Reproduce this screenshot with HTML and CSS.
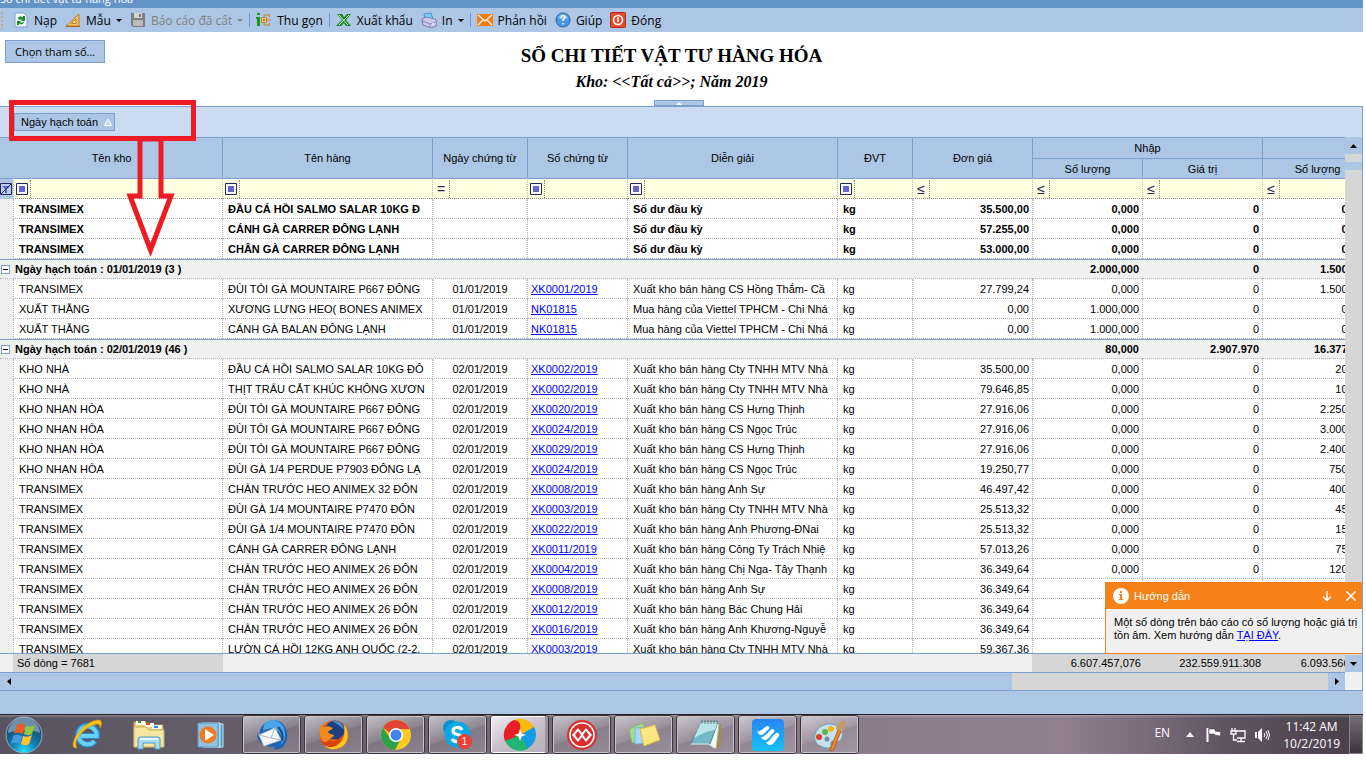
FILE: index.html
```
<!DOCTYPE html>
<html lang="vi">
<head>
    <meta charset="UTF-8">
    <meta name="viewport" content="width=device-width, initial-scale=1.0">
    <title>Sổ chi tiết vật tư hàng hóa</title>
    <link rel="stylesheet" href="styles.css">
</head>
<body>
    <div class="screen">
        <div class="titlebar"><span>Sổ chi tiết vật tư hàng hóa</span></div>

        <div class="toolbar">
            <span class="grip"></span>
            <button class="tool">
                <svg width="16" height="16" viewBox="0 0 16 16"><path d="M2 1h9l3 3v11H2z" fill="#f4f9ff" stroke="#7d9fce"/><path d="M5 6c1-2 4-2 5 0V4h2v5H8l1-1c-1-1-2-1-3 0zM11 10c-1 3-4 3-5 1v2H4V9h4L7 10c1 1 2 1 3 0z" fill="#12901f"/></svg>
                Nạp
            </button>
            <button class="tool">
                <svg width="16" height="16" viewBox="0 0 16 16"><path d="M1 14 14 2v12z" fill="#f3c260" stroke="#bd7d25"/><path d="M6 11.5 11 7v4.500z" fill="#fff2cf" stroke="#bd7d25"/><path d="M1 14.500h14" stroke="#a5661c"/></svg>
                Mẫu <i class="caret"></i>
            </button>
            <button class="tool" disabled>
                <svg width="16" height="16" viewBox="0 0 16 16"><path d="M1 1h14v14H3l-2-2z" fill="#7d7d7d"/><path d="M4 1h8v5H4z" fill="#d4d4d4"/><path d="M9 2h2v3H9z" fill="#777"/><path d="M3 8h10v6H3z" fill="#b9b9b9"/></svg>
                Báo cáo đã cất <i class="caret"></i>
            </button>
            <span class="sep"></span>
            <button class="tool">
                <svg width="16" height="16" viewBox="0 0 16 16"><path d="M1 1h3v2H1zM0 5h4v9H1V7H0z" fill="#159a1c"/><path d="M5.500 5.500h5v5h-5zM8 3v10M8 3h6M8 13h6M11 8h4M13.500 2v3M13.500 11v3" fill="none" stroke="#c98320"/><path d="M6 6h4v4H6z" fill="#ffe7a2"/><path d="M6.500 8h3M8 6.500v3" stroke="#a8620c"/></svg>
                Thu gọn
            </button>
            <span class="sep"></span>
            <button class="tool">
                <svg width="16" height="16" viewBox="0 0 16 16"><path d="M1 2h5l2 3 3-3h4l-5 6 5 6h-5l-2-3-3 3H0l6-6z" fill="#178a24"/><path d="m3 3 9 10M13 3 3 13" stroke="#d9f3d2"/></svg>
                Xuất khẩu
            </button>
            <button class="tool">
                <svg width="16" height="16" viewBox="0 0 16 16"><path d="m3 2 7-1 2 6-8 1z" fill="#7ccaf2" stroke="#4595c7"/><path d="m1 7 4-2 9 2 2 3-1 4-5 2-8-3z" fill="#c9c8e5" stroke="#7e7bb2"/><path d="m2 9 7 3 6-2M9 12v3" fill="none" stroke="#8d8abd"/><circle cx="12" cy="12" r="1" fill="#f6f6ff"/></svg>
                In <i class="caret"></i>
            </button>
            <span class="sep"></span>
            <button class="tool">
                <svg width="16" height="16" viewBox="0 0 16 16"><path d="M0 2h16v12H0z" fill="#ef7d17"/><path d="m1 3 7 6 7-6M1 13l5-5M15 13l-5-5" fill="none" stroke="#fff1de" stroke-width="1.300"/></svg>
                Phản hồi
            </button>
            <button class="tool">
                <svg width="16" height="16" viewBox="0 0 16 16"><circle cx="8" cy="8" r="7" fill="#4b96e4" stroke="#2664ac"/><path d="M3 6c1-5 9-5 10 0-3 2-7 2-10 0z" fill="#83bdf2"/><path d="M6 6c0-3 4-3 4-1 0 1-2 2-2 4M8 11v1.500" fill="none" stroke="#fff" stroke-width="1.500"/></svg>
                Giúp
            </button>
            <button class="tool">
                <svg width="16" height="16" viewBox="0 0 16 16"><rect x=".5" y=".5" width="15" height="15" rx="1" fill="#e34c2d" stroke="#a92b19"/><circle cx="8" cy="8" r="4.500" fill="none" stroke="#fff" stroke-width="1.600"/><path d="M8 5v5" stroke="#fff" stroke-width="1.600"/></svg>
                Đóng
            </button>
        </div>

        <div class="report-head">
            <button class="params">Chọn tham số...</button>
            <div class="titles">
                <h1>SỔ CHI TIẾT VẬT TƯ HÀNG HÓA</h1>
                <h2>Kho: &lt;&lt;Tất cả&gt;&gt;; Năm 2019</h2>
            </div>
            <button class="fold" aria-label="Ẩn tiêu đề"><i></i></button>
        </div>

        <div class="grid">
            <div class="group-panel">
                <button class="chip">Ngày hạch toán
                    <svg width="8" height="8" viewBox="0 0 8 8"><path d="M4 1 .5 7.500h7z" fill="#c5d8f0" stroke="#fff"/></svg>
                </button>
            </div>

            <div class="grid-area">
                <div class="table-pane">
                    <div class="rows">
                        <table>
                            <colgroup>
                                <col class="w-sel"><col class="w-kho"><col class="w-hang"><col class="w-ngay"><col class="w-so">
                                <col class="w-hang"><col class="w-dvt"><col class="w-gia"><col class="w-num"><col class="w-gia"><col class="w-num">
                            </colgroup>
                            <thead>
                                <tr class="h1">
                                    <th rowspan="2" colspan="2">Tên kho</th>
                                    <th rowspan="2">Tên hàng</th>
                                    <th rowspan="2">Ngày chứng từ</th>
                                    <th rowspan="2">Số chứng từ</th>
                                    <th rowspan="2">Diễn giải</th>
                                    <th rowspan="2">ĐVT</th>
                                    <th rowspan="2">Đơn giá</th>
                                    <th colspan="2">Nhập</th>
                                    <th></th>
                                </tr>
                                <tr class="h2">
                                    <th>Số lượng</th>
                                    <th>Giá trị</th>
                                    <th>Số lượng</th>
                                </tr>
                                <tr class="filter" id="filter"></tr>
                            </thead>
                            <tbody id="rows"></tbody>
                        </table>
                    </div>
                    <div class="summary">
                        <span class="w-sel"></span>
                        <span class="count">Số dòng = 7681</span>
                        <span class="blank"></span>
                        <span class="w-num sum">6.607.457,076</span>
                        <span class="w-gia sum">232.559.911.308</span>
                        <span class="w-num sum">6.093.566,385</span>
                    </div>
                </div>
                <div class="vscroll">
                    <button class="sb" aria-label="Lên"><svg width="7" height="4" viewBox="0 0 7 4"><path d="M0 4 3.500 0 7 4z"/></svg></button>
                    <span class="vthumb"></span>
                    <button class="sb" aria-label="Xuống"><svg width="7" height="4" viewBox="0 0 7 4"><path d="M0 0h7L3.500 4z"/></svg></button>
                </div>
                <div class="hscroll">
                    <button class="sb" aria-label="Trái"><svg width="4" height="7" viewBox="0 0 4 7"><path d="M4 0v7L0 3.500z"/></svg></button>
                    <span class="hthumb"></span>
                    <button class="sb" aria-label="Phải"><svg width="4" height="7" viewBox="0 0 4 7"><path d="M0 0v7l4-3.500z"/></svg></button>
                </div>
                <div class="corner"></div>

                <div class="notice">
                    <div class="notice-head">
                        <svg width="16" height="16" viewBox="0 0 16 16"><circle cx="8" cy="8" r="8" fill="#fff"/><path d="M7 3h2v2H7zM6 6h3v5h1v1H6v-1h1V7H6z" fill="#f58118"/></svg>
                        <span>Hướng dẫn</span>
                        <button aria-label="Thu nhỏ"><svg width="10" height="10" viewBox="0 0 10 10"><path d="M5 0v9M1 5.500l4 4 4-4"/></svg></button>
                        <button aria-label="Đóng"><svg width="10" height="10" viewBox="0 0 10 10"><path d="m0 0 10 10M10 0 0 10"/></svg></button>
                    </div>
                    <p>Một số dòng trên báo cáo có số lượng hoặc giá trị tồn âm. Xem hướng dẫn <a href="#">TẠI ĐÂY</a>.</p>
                </div>
            </div>

            <!-- đánh dấu vùng nhóm -->
            <svg class="mark" width="190" height="160" viewBox="0 0 190 160">
                <path d="M2.500 2.500h182v36H2.500zM131 39h21v57h10l-20.500 54L121 96h10z" fill="none" stroke="#ed1c24" stroke-width="5"/>
            </svg>
        </div>

        <div class="strip"></div>

        <div class="taskbar">
            <button class="start" aria-label="Start">
                <svg width="38" height="38" viewBox="0 0 38 38">
                    <defs><radialGradient id="orb" cx=".5" cy=".95" r=".8"><stop offset="0" stop-color="#1fe4ff"/><stop offset=".4" stop-color="#1583b8"/><stop offset="1" stop-color="#173f66"/></radialGradient></defs>
                    <circle cx="19" cy="19" r="18" fill="url(#orb)" stroke="#93aebd"/>
                    <path d="M3 17a16 16 0 0 1 32 0c-9-4-22-3-32 0z" fill="#c9dce6" opacity=".5"/>
                    <path d="M12 9c4-2 6-1 8 0l-2 9c-3-1-6-2-9 0z" fill="#ee5a26"/><path d="M21 10c3 1 6 1 9-1l-3 9c-3 2-6 1-8 0z" fill="#92c83e"/>
                    <path d="M8 20c3-2 6-1 9 0l-2 8c-3-1-6-2-9 0z" fill="#3f9be2"/><path d="M18 20c3 1 6 1 9-1l-3 9c-3 2-6 1-8 0z" fill="#fdc52d"/>
                </svg>
            </button>
            <button class="pin" aria-label="Internet Explorer">
                <svg width="32" height="32" viewBox="0 0 32 32"><path d="M24 22a9.500 9.500 0 1 1 2-5H10" fill="none" stroke="#238fd3" stroke-width="6"/><path d="M23.500 22a9 9 0 1 1 2-5H10" fill="none" stroke="#6bd0fb" stroke-width="4"/><path d="M6 29c-6 1-5-8 2-16C16 3 27-1 30 2c1 2 0 5-1 7 0-4-2-5-6-3C14 8 4 20 5 25c0 2 0 3 1 4z" fill="#f6c51c" stroke="#d79707" stroke-width=".6"/></svg>
            </button>
            <button class="pin" aria-label="Windows Explorer">
                <svg width="34" height="32" viewBox="0 0 34 32"><path d="M2 3h12l2 3h15v22H2z" fill="#e9cf78" stroke="#b79545"/><path d="M4 2h9v4H4zM13 4h9v4h-9zM20 6h10v4H20z" fill="#fffef5"/><path d="M6 2h3v2H6z" fill="#23a736"/><path d="M14 4h4v2h-4z" fill="#df4b23"/><path d="M22 7h4v2h-4z" fill="#2a8ce1"/><path d="M2 8h12l3 3h15v17H2z" fill="#f7e6a3" stroke="#d0b25c"/><path d="M6 30V20q0-2 2-2h18q2 0 2 2v10h-5v-6H11v6z" fill="#a8dcf4" stroke="#4e9fc4"/><path d="M8 20h18" stroke="#e9faff" stroke-width="2"/></svg>
            </button>
            <button class="pin" aria-label="Media Player">
                <svg width="28" height="28" viewBox="0 0 28 28"><path d="M8 3h18v23H8z" fill="#4f9bc5" stroke="#bee5f7"/><path d="M5 2h18v24H5z" fill="#7dbddf" stroke="#d2f0fc"/><path d="M1 2h20v24H1z" fill="#8fc5e3" stroke="#5a99be"/><circle cx="11" cy="14" r="8.500" fill="#f17920"/><path d="m8 8 9 6-9 6z" fill="#fff"/></svg>
            </button>

            <button class="task" aria-label="Thunderbird">
                <svg width="34" height="32" viewBox="0 0 34 32"><path d="M9 5c4-4 14-6 19 0 6 7 5 17 1 21-1 3-6 5-11 4l3-2C9 29 2 23 2 14l2 3c0-5 2-9 5-12z" fill="#1d62b5"/><path d="M11 3c6-3 13-2 17 4 3 6 3 13-2 19 2-8 0-14-7-16-4-1-9 0-11 2 0-4 1-7 3-9z" fill="#48a6e8"/><path d="m4 16 16-7 6 12-17 6z" fill="#f6f7f8" stroke="#bac4cd"/><path d="m4 16 12 3 4-10M16 19l10 2" fill="none" stroke="#aeb9c2"/><path d="M23 8c4 4 6 8 4 14" fill="none" stroke="#174680" stroke-width="2"/></svg>
            </button>
            <button class="task" aria-label="Firefox">
                <svg width="32" height="32" viewBox="0 0 32 32"><circle cx="16" cy="16" r="14.500" fill="#e95c12"/><circle cx="17" cy="11" r="9.500" fill="#1d3f83"/><path d="M14 2c7-1 11 3 12 9-3-4-8-7-12-9z" fill="#4a92cf"/><path d="M26 6c5 5 5 15 0 20s-15 6-20 0c7 3 14 1 17-3 4-5 4-11 3-17z" fill="#fcca26"/><path d="M3 5c1 2 2 3 4 3 4-2 5 0 8 1-1 2-4 2-5 4 1 2 4 2 6 3 0 3-4 2-5 5 4 2 8 0 10-1-2 7-12 8-16 2C1 17 1 10 3 5z" fill="#f28a1c"/><path d="M11 21c5 3 9 0 12-4 0 6-4 11-10 11-4 0-8-2-10-6 3 2 6 1 8-1z" fill="#d9410f"/></svg>
            </button>
            <button class="task" aria-label="Chrome">
                <svg width="32" height="32" viewBox="0 0 32 32"><circle cx="16" cy="16" r="15" fill="#fbc922"/><path d="M3 8.500a15 15 0 0 1 26 0L29.500 10H16a6.500 6.500 0 0 0-6 4z" fill="#e04535"/><path d="M3 8.500A15 15 0 0 0 15 31l6-11.500c-4 5-10 3-11.500-1z" fill="#2ba14b"/><circle cx="16" cy="16" r="7" fill="#fff"/><circle cx="16" cy="16" r="5.500" fill="#4385ee"/></svg>
            </button>
            <button class="task" aria-label="Skype">
                <svg width="32" height="32" viewBox="0 0 32 32"><circle cx="9" cy="9" r="8" fill="#0791cf"/><circle cx="22" cy="22" r="8" fill="#0791cf"/><circle cx="15.500" cy="15.500" r="13" fill="#08a8e7"/><path d="M20 11c-2-4-9-3-9 1 0 5 9 2 9 7 0 4-8 5-10 1" fill="none" stroke="#fff" stroke-width="3.200"/></svg>
                <span class="badge">1</span>
            </button>
            <button class="task active" aria-label="MISA">
                <svg width="34" height="34" viewBox="0 0 34 34"><path d="M17 17 8 3.500A16 16 0 0 1 31 9c2 6-3 10-8 8z" fill="#fbb80f"/><path d="M17 17 31 9a16 16 0 0 1-7 22c-7 2-10-4-7-8z" fill="#159ce5"/><path d="M17 17l8 13.500A16 16 0 0 1 2 23c-1-7 6-9 9-6z" fill="#22b573"/><path d="M17 17 2 23A16 16 0 0 1 10 2.500c7-2 9 5 7 9z" fill="#e91e26"/><path d="M13 2c7-2 15 1 18 7-5-4-10-2-14 2 1-4 0-7-4-9z" fill="#fbb80f"/><path d="m17 11 1.500 4.500L23 17l-4.500 1.500L17 23l-1.500-4.500L11 17l4.500-1.500z" fill="#fff"/></svg>
            </button>
            <button class="task" aria-label="Kế toán">
                <svg width="32" height="32" viewBox="0 0 32 32"><circle cx="16" cy="16" r="15" fill="#d9302f"/><circle cx="16" cy="16" r="12" fill="none" stroke="#fff" stroke-width="1.700"/><path d="m6 16 6-7 4 5 4-5 6 7-6 7-4-5-4 5z" fill="#fff"/><path d="m9 16 3-4 3 4-3 4zM17 16l3-4 3 4-3 4z" fill="#d9302f"/></svg>
            </button>
            <button class="task" aria-label="Sticky Notes">
                <svg width="34" height="32" viewBox="0 0 34 32"><path d="m2 10 14-6 5 16-16 4z" fill="#a5dd8a" stroke="#83b874"/><path d="m8 9 14-1 1 16-15 1z" fill="#a9d7fa" stroke="#7fb3d9"/><path d="m13 10 15-4 5 15-16 6z" fill="#fbe681" stroke="#d8b94e"/></svg>
            </button>
            <button class="task" aria-label="Notepad">
                <svg width="32" height="32" viewBox="0 0 32 32"><path d="m27 4 4 1v22l-5 3z" fill="#a38a50"/><path d="m24 4 5 1-3 25-7-5z" fill="#f5f7f5" stroke="#a9b5b5"/><path d="M11 3h17l-8 22H1z" fill="#75b9c9" stroke="#4b8796"/><path d="M11 3h17l-3 8C17 12 11 15 4 19z" fill="#bae4e9"/><path d="M12 1v4m3-4v4m3-4v4m3-4v4m3-4v4m3-4v4" stroke="#69777a"/><path d="M1 25h18l5 4" stroke="#f1fafa" fill="none"/></svg>
            </button>
            <button class="task" aria-label="eSign">
                <svg width="32" height="32" viewBox="0 0 32 32"><defs><linearGradient id="es" x2="0" y2="1"><stop stop-color="#2684f5"/><stop offset="1" stop-color="#16c1fb"/></linearGradient></defs><rect width="32" height="32" rx="4" fill="url(#es)"/><path d="M5 12c3 2 6-3 10-5 2 0 3 1 2 3-3 2-5 6-8 6-2 0-3-2-4-4zM9 18c3 1 7-5 11-8 2 0 3 1 2 3-3 3-6 8-9 8-2 0-3-1-4-3zM14 23c3 1 6-6 10-9 2-1 4 1 3 3-3 3-5 9-9 9-2 0-3-1-4-3z" fill="#fff"/></svg>
            </button>
            <button class="task" aria-label="Paint">
                <svg width="34" height="32" viewBox="0 0 34 32"><path d="M5 10c7-8 21-6 24 3 2 8-4 11-7 9-3-1-5 1-4 4 1 3-4 4-8 2C0 25 0 16 5 10z" fill="#c6e1f0" stroke="#6da0bd"/><circle cx="6" cy="18" r="3" fill="#e23b2f"/><circle cx="12" cy="13" r="3" fill="#57b847"/><circle cx="18" cy="10" r="3" fill="#f9b51e"/><circle cx="14" cy="20" r="2.500" fill="#6f8ca3"/><path d="m25 11 3 1-8 20-3-1z" fill="#ef8c27" stroke="#b95d12"/><path d="M23 10c0-3 3-8 9-9 0 3 1 7-3 12z" fill="#c29a68"/></svg>
            </button>

            <div class="tray">
                <span class="lang">EN</span>
                <svg class="more" width="8" height="5" viewBox="0 0 8 5"><path d="M0 5 4 0l4 5z" fill="#fff"/></svg>
                <svg width="16" height="16" viewBox="0 0 16 16"><path d="M1.500 1v14" stroke="#fff" stroke-width="2"/><path d="M3 2h6v2l6 1-1 4-5-1-1-1H3z" fill="#fff" stroke="#333" stroke-width=".5"/></svg>
                <svg width="16" height="16" viewBox="0 0 16 16"><path d="M6 4h9v7H7M11 11v3M7 14.500h8M2 1v3M5 1v3M1 4h5v3H1zM3.500 7v6H7" fill="none" stroke="#fff" stroke-width="1.300"/></svg>
                <svg width="16" height="16" viewBox="0 0 16 16"><path d="M1 5h2v6H1zM4 5l4-4v14l-4-4z" fill="#fff"/><path d="M10 6q2 2 0 4M12 4q3 4 0 8M14 3q3 5 0 10" fill="none" stroke="#fff"/></svg>
                <div class="clock">11:42 AM<br>10/2/2019</div>
            </div>
            <button class="peek" aria-label="Show desktop"></button>
        </div>
    </div>

    <script>
        // g: dòng nhóm, b: số dư đầu kỳ, còn lại là chứng từ
        const data = [
            { b: 1, c: ['TRANSIMEX', 'ĐẦU CÁ HỒI SALMO SALAR 10KG Đ', '', '', 'Số dư đầu kỳ', '35.500,00', '0,000', '0', '0,000'] },
            { b: 1, c: ['TRANSIMEX', 'CÁNH GÀ CARRER ĐÔNG LẠNH', '', '', 'Số dư đầu kỳ', '57.255,00', '0,000', '0', '0,000'] },
            { b: 1, c: ['TRANSIMEX', 'CHÂN GÀ CARRER ĐÔNG LẠNH', '', '', 'Số dư đầu kỳ', '53.000,00', '0,000', '0', '0,000'] },
            { g: 'Ngày hạch toán : 01/01/2019 (3 )', c: ['2.000,000', '0', '1.500,000'] },
            { c: ['TRANSIMEX', 'ĐÙI TỎI GÀ MOUNTAIRE P667 ĐÔNG', '01/01/2019', 'XK0001/2019', 'Xuất kho bán hàng CS Hồng Thắm- Cầ', '27.799,24', '0,000', '0', '1.500,000'] },
            { c: ['XUẤT THẲNG', 'XƯƠNG LƯNG HEO( BONES ANIMEX', '01/01/2019', 'NK01815', 'Mua hàng của Viettel TPHCM - Chi Nhá', '0,00', '1.000,000', '0', '0,000'] },
            { c: ['XUẤT THẲNG', 'CÁNH GÀ BALAN ĐÔNG LẠNH', '01/01/2019', 'NK01815', 'Mua hàng của Viettel TPHCM - Chi Nhá', '0,00', '1.000,000', '0', '0,000'] },
            { g: 'Ngày hạch toán : 02/01/2019 (46 )', c: ['80,000', '2.907.970', '16.377,000'] },
            { c: ['KHO NHÀ', 'ĐẦU CÁ HỒI SALMO SALAR 10KG ĐÔ', '02/01/2019', 'XK0002/2019', 'Xuất kho bán hàng Cty TNHH MTV Nhà', '35.500,00', '0,000', '0', '20,000'] },
            { c: ['KHO NHÀ', 'THỊT TRÂU CẮT KHÚC KHÔNG XƯƠN', '02/01/2019', 'XK0002/2019', 'Xuất kho bán hàng Cty TNHH MTV Nhà', '79.646,85', '0,000', '0', '10,000'] },
            { c: ['KHO NHAN HÒA', 'ĐÙI TỎI GÀ MOUNTAIRE P667 ĐÔNG', '02/01/2019', 'XK0020/2019', 'Xuất kho bán hàng CS Hưng Thịnh', '27.916,06', '0,000', '0', '2.250,000'] },
            { c: ['KHO NHAN HÒA', 'ĐÙI TỎI GÀ MOUNTAIRE P667 ĐÔNG', '02/01/2019', 'XK0024/2019', 'Xuất kho bán hàng CS Ngọc Trúc', '27.916,06', '0,000', '0', '3.000,000'] },
            { c: ['KHO NHAN HÒA', 'ĐÙI TỎI GÀ MOUNTAIRE P667 ĐÔNG', '02/01/2019', 'XK0029/2019', 'Xuất kho bán hàng CS Hưng Thịnh', '27.916,06', '0,000', '0', '2.400,000'] },
            { c: ['KHO NHAN HÒA', 'ĐÙI GÀ 1/4 PERDUE P7903 ĐÔNG LẠ', '02/01/2019', 'XK0024/2019', 'Xuất kho bán hàng CS Ngọc Trúc', '19.250,77', '0,000', '0', '750,000'] },
            { c: ['TRANSIMEX', 'CHÂN TRƯỚC HEO ANIMEX 32 ĐÔN', '02/01/2019', 'XK0008/2019', 'Xuất kho bán hàng Anh Sự', '46.497,42', '0,000', '0', '400,000'] },
            { c: ['TRANSIMEX', 'ĐÙI GÀ 1/4 MOUNTAIRE P7470 ĐÔN', '02/01/2019', 'XK0003/2019', 'Xuất kho bán hàng Cty TNHH MTV Nhà', '25.513,32', '0,000', '0', '45,000'] },
            { c: ['TRANSIMEX', 'ĐÙI GÀ 1/4 MOUNTAIRE P7470 ĐÔN', '02/01/2019', 'XK0022/2019', 'Xuất kho bán hàng Anh Phương-ĐNai', '25.513,32', '0,000', '0', '15,000'] },
            { c: ['TRANSIMEX', 'CÁNH GÀ CARRER ĐÔNG LẠNH', '02/01/2019', 'XK0011/2019', 'Xuất kho bán hàng Công Ty Trách Nhiệ', '57.013,26', '0,000', '0', '75,000'] },
            { c: ['TRANSIMEX', 'CHÂN TRƯỚC HEO ANIMEX 26 ĐÔN', '02/01/2019', 'XK0004/2019', 'Xuất kho bán hàng Chị Nga- Tây Thạnh', '36.349,64', '0,000', '0', '120,000'] },
            { c: ['TRANSIMEX', 'CHÂN TRƯỚC HEO ANIMEX 26 ĐÔN', '02/01/2019', 'XK0008/2019', 'Xuất kho bán hàng Anh Sự', '36.349,64', '', '', ''] },
            { c: ['TRANSIMEX', 'CHÂN TRƯỚC HEO ANIMEX 26 ĐÔN', '02/01/2019', 'XK0012/2019', 'Xuất kho bán hàng Bác Chung Hải', '36.349,64', '', '', ''] },
            { c: ['TRANSIMEX', 'CHÂN TRƯỚC HEO ANIMEX 26 ĐÔN', '02/01/2019', 'XK0016/2019', 'Xuất kho bán hàng Anh Khương-Nguyễ', '36.349,64', '', '', ''] },
            { c: ['TRANSIMEX', 'LƯỜN CÁ HỒI 12KG ANH QUỐC (2-2.', '02/01/2019', 'XK0003/2019', 'Xuất kho bán hàng Cty TNHH MTV Nhà', '59.367,36', '', '', ''] }
        ];

        const cols = ['Tên kho', 'Tên hàng', 'Ngày chứng từ', 'Số chứng từ', 'Diễn giải', 'ĐVT', 'Đơn giá', 'Nhập số lượng', 'Nhập giá trị', 'Xuất số lượng'];
        const ops = ['box', 'box', '=', 'box', 'box', 'box', '≤', '≤', '≤', '≤'];
        const box = '<svg width="12" height="12" viewBox="0 0 12 12"><path d="M.5.5h11v11H.5z" fill="#fff" stroke="#26265c"/><path d="M3 3h6v6H3z" fill="#6465cf"/></svg>';

        let filter = '<td class="sel"><svg width="12" height="12" viewBox="0 0 12 12"><path d="M.5.5h11v11H.5z" fill="#b9cdf0" stroke="#26265c"/><path d="M2 3h8L7 6v4H5V6z" fill="#6465cf"/><path d="M1 11 11 1" stroke="#26265c"/></svg></td>';
        ops.forEach((op, i) => {
            filter += `<td><div class="fcell"><button class="op" aria-label="Điều kiện ${cols[i]}">${op === 'box' ? box : op}</button><input type="text" aria-label="Lọc ${cols[i]}"></div></td>`;
        });
        document.getElementById('filter').innerHTML = filter;

        document.getElementById('rows').innerHTML = data.map(r => {
            if (r.g) {
                return `<tr class="group"><td colspan="8"><button class="toggle" aria-label="Thu gọn nhóm"></button>${r.g}</td>`
                    + r.c.map(v => `<td class="num">${v}</td>`).join('') + '</tr>';
            }
            const [kho, hang, ngay, so, dg, gia, sl, gt, xuat] = r.c;
            return `<tr class="${r.b ? 'open' : ''}"><td class="sel"></td><td>${kho}</td><td>${hang}</td><td class="date">${ngay}</td>`
                + `<td class="doc">${so ? `<a href="#">${so}</a>` : ''}</td><td>${dg}</td><td>kg</td>`
                + [gia, sl, gt, xuat].map(v => `<td class="num">${v}</td>`).join('') + '</tr>';
        }).join('');
    </script>
</body>
</html>
```
FILE: styles.css
```
* {
    box-sizing: border-box;
}

body {
    margin: 0;
    background: #fff;
    color: #000;
    font-family: "Liberation Sans", Arial, sans-serif;
    font-size: 11px;
}

button {
    margin: 0;
    padding: 0;
    border: 0;
    background: none;
    color: inherit;
    font: inherit;
}

a {
    color: #0000ff;
}

.screen {
    display: flex;
    flex-direction: column;
    height: calc(100vh - 14px);
    margin-right: 3px;
    overflow: hidden;
}

.titlebar {
    display: flex;
    align-items: flex-end;
    flex: none;
    height: 8px;
    overflow: hidden;
    background: #6495c8;
    color: #fff;
    font: 11px/18px "Open Sans", sans-serif;
}

/* thanh công cụ */
.toolbar {
    display: flex;
    align-items: center;
    flex: none;
    height: 24px;
    background: #adc6e6;
    font-family: "Open Sans", sans-serif;
    font-size: 12px;
}

.grip {
    width: 5px;
    height: 18px;
    margin-right: 4px;
    background: radial-gradient(#c5a98c 1px, transparent 1px) 0 0 / 4px 4px;
}

.tool {
    display: flex;
    align-items: center;
    gap: 5px;
    padding: 0 4px;
    white-space: nowrap;
}

.tool:disabled {
    color: #808080;
}

.caret {
    border: 3px solid transparent;
    border-top-color: currentColor;
    border-bottom: 0;
}

.sep {
    width: 1px;
    height: 14px;
    margin: 0 2px;
    background: #6e9bd2;
}

.report-head {
    position: relative;
    flex: none;
    height: 74px;
}

.params {
    position: absolute;
    left: 5px;
    top: 8px;
    height: 23px;
    padding: 0 9px;
    border: 1px solid #7ba0d0;
    background: #adc6e6;
    font-family: "Open Sans", sans-serif;
}

.titles {
    padding: 12px 20px 0 0;
    text-align: center;
    font-family: "Liberation Serif", "Times New Roman", serif;
}

.titles h1 {
    margin: 0;
    font-size: 19px;
    line-height: 24px;
}

.titles h2 {
    margin: 0;
    font-size: 16px;
    font-style: italic;
    line-height: 28px;
}

.fold {
    position: absolute;
    left: 48%;
    bottom: 0;
    display: flex;
    justify-content: center;
    align-items: center;
    width: 50px;
    height: 6px;
    border: 1px solid #7ba0d0;
    background: #adc6e6;
}

.fold i {
    border: 3px solid transparent;
    border-top: 0;
    border-bottom-color: #fff;
}

/* lưới dữ liệu */
.grid {
    position: relative;
    display: flex;
    flex-direction: column;
    flex: 1;
    min-height: 0;
    border: 1px solid #7ba0d0;
    border-left: 0;
}

.group-panel {
    flex: none;
    height: 30px;
    padding: 6px 14px;
    background: #cbdbf1;
}

.chip {
    display: flex;
    align-items: center;
    gap: 6px;
    height: 18px;
    padding: 0 2px 0 6px;
    border: 1px solid #7ba0d0;
    background: #adc6e6;
}

.grid-area {
    position: relative;
    display: grid;
    grid-template-columns: 1fr 17px;
    grid-template-rows: 1fr 18px;
    flex: 1;
    min-height: 0;
}

.table-pane {
    display: flex;
    flex-direction: column;
    min-width: 0;
    min-height: 0;
    overflow: hidden;
}

.rows {
    flex: 1;
    min-height: 0;
    overflow: hidden;
}

table {
    width: 1372px;
    table-layout: fixed;
    border-spacing: 0;
    line-height: 14px;
}

.w-sel { width: 13px; }
.w-kho { width: 209px; }
.w-hang { width: 210px; }
.w-ngay { width: 95px; }
.w-so { width: 100px; }
.w-dvt { width: 75px; }
.w-gia { width: 120px; }
.w-num { width: 110px; }

th {
    padding: 0;
    border-top: 1px solid #7ba0d0;
    border-left: 1px solid #7ba0d0;
    background: #adc6e6;
    font-weight: normal;
}

th:first-child {
    border-left-color: #adc6e6;
}

.h2 th:first-child {
    border-left-color: #7ba0d0;
}

.h1 {
    height: 21px;
}

.h2 {
    height: 20px;
}

td {
    height: 20px;
    padding: 0 0 0 5px;
    border-left: 1px dotted #b5b5b5;
    border-bottom: 1px dotted #b5b5b5;
    overflow: hidden;
    white-space: nowrap;
}

td.sel {
    padding: 0;
    border: 0;
    background: #f0f0f0;
}

td.date {
    padding: 0;
    text-align: center;
}

td.doc {
    padding-left: 3px;
}

td.num {
    padding: 0 3px 0 0;
    text-align: right;
}

.open {
    font-weight: bold;
}

.filter td {
    height: 21px;
    padding: 0;
    border-top: 1px solid #7ba0d0;
    border-bottom: 1px dotted #888;
    background: #ffffe1;
}

.filter td.sel {
    border-bottom: 0;
    background: #adc6e6;
}

.filter svg {
    display: block;
}

.fcell {
    display: flex;
    height: 18px;
}

.op {
    display: flex;
    justify-content: center;
    align-items: center;
    flex: none;
    width: 17px;
    border-right: 1px dotted #888;
    color: #26265c;
    font-size: 14px;
}

.fcell input {
    flex: 1;
    min-width: 0;
    border: 0;
    padding: 0 2px;
    background: none;
    font: inherit;
}

.group td {
    padding-left: 1px;
    border-top: 1px solid #7ba0d0;
    border-left: 0;
    background: #f0f0f0;
    font-weight: bold;
}

.toggle {
    width: 9px;
    height: 9px;
    margin-right: 5px;
    border: 1px solid #7ba0d0;
    background: linear-gradient(#000, #000) center / 5px 1px no-repeat #fff;
}

.summary {
    display: flex;
    flex: none;
    width: 1372px;
    height: 19px;
    border-top: 1px solid #7ba0d0;
    background: #f0f0f0;
    line-height: 18px;
}

.summary .count {
    width: 210px;
    padding-left: 4px;
    background: #d6d6d6;
}

.summary .blank {
    flex: 1;
}

.summary .sum {
    padding-right: 1px;
    background: #d6d6d6;
    text-align: right;
}

.sb {
    display: flex;
    justify-content: center;
    align-items: center;
    flex: none;
    width: 17px;
    height: 17px;
    background: #adc6e6;
}

.vscroll {
    display: flex;
    flex-direction: column;
    justify-content: space-between;
    background: #d6d6d6;
}

.vthumb {
    height: 8px;
    margin: 8px 0 auto;
    background: #adc6e6;
}

.hscroll {
    display: flex;
    border-top: 1px solid #7ba0d0;
    background: #d6d6d6;
}

.hthumb {
    width: 74%;
    margin-right: auto;
    background: #adc6e6;
}

.corner {
    background: #f0f0f0;
}

/* bảng hướng dẫn nổi */
.notice {
    position: absolute;
    right: 0;
    bottom: 36px;
    width: 257px;
    height: 72px;
    border: solid #f58118;
    border-width: 0 0 1px 1px;
    background: #f0f0f0;
}

.notice-head {
    display: flex;
    align-items: center;
    height: 27px;
    padding: 0 6px 0 7px;
    background: #f58118;
    color: #fff;
}

.notice-head span {
    flex: 1;
    padding-left: 5px;
}

.notice-head button {
    display: flex;
    margin-left: 14px;
}

.notice-head button path {
    fill: none;
    stroke: #fff;
    stroke-width: 1.5;
}

.notice p {
    margin: 0;
    padding: 7px 4px 0 8px;
    line-height: 13px;
}

.mark {
    position: absolute;
    left: 9px;
    top: -7px;
    pointer-events: none;
}

.strip {
    flex: none;
    height: 23px;
    background: #adc6e6;
}

.taskbar {
    display: flex;
    flex: none;
    height: 40px;
    border-top: 1px solid #24232c;
    background:
        linear-gradient(rgba(255, 255, 255, 0.25), rgba(255, 255, 255, 0) 3px),
        linear-gradient(90deg, #59535f, #665e6c 18%, #6d6370 30%, #8a7b8b 62%, #917f91 78%, #7b6b7b 84%, #5f5461 90%, #483f49);
}

.taskbar button {
    display: flex;
    justify-content: center;
    align-items: center;
}

.start {
    width: 48px;
    margin-right: 8px;
}

.pin {
    width: 62px;
}

.taskbar .task {
    position: relative;
    width: 59px;
    margin-right: 3px;
    border: 1px solid #c9c2ca;
    border-radius: 3px;
    outline: 1px solid #39343c;
    outline-offset: -1px;
    background: linear-gradient(160deg, rgba(255, 255, 255, 0.6), rgba(255, 255, 255, 0.2) 50%, rgba(255, 255, 255, 0.12) 51%, rgba(255, 255, 255, 0.2));
    box-shadow: inset 0 0 0 1px #c9c2ca;
}

.taskbar .active {
    background: linear-gradient(150deg, #f1eef1, #c8c1c9 50%, #b7afb9);
    box-shadow: inset -4px 0 0 -1px #9b929e, inset 0 0 0 1px #fff;
}

.badge {
    position: absolute;
    right: 14px;
    bottom: 4px;
    width: 15px;
    height: 15px;
    border-radius: 50%;
    background: #f03d32;
    color: #fff;
    font-size: 10px;
    line-height: 15px;
    text-align: center;
}

.tray {
    display: flex;
    align-items: center;
    gap: 8px;
    margin-left: auto;
    padding-right: 9px;
    color: #fff;
    font: 12px/17px "Open Sans", sans-serif;
}

.lang {
    margin-right: 8px;
    padding-bottom: 4px;
}

.more {
    margin-right: 4px;
}

.clock {
    margin-left: 5px;
    text-align: center;
}

.taskbar .peek {
    width: 14px;
    border: 1px solid #8c828d;
    background: linear-gradient(#766c78, #3c343e);
}
```
